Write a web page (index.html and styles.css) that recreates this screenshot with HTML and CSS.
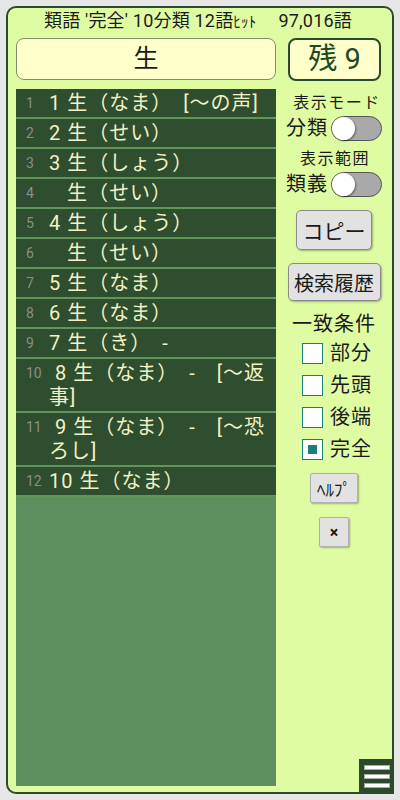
FILE: index.html
```html
<!DOCTYPE html>
<html lang="ja">
<head>
    <meta charset="UTF-8">
    <meta name="viewport" content="width=device-width, initial-scale=1.0">
    <title>類語検索</title>
    <link rel="stylesheet" href="styles.css">
</head>
<body>
    <div class="frame">
        <div class="status">
            <span>類語 '完全' 10分類 12語<span class="kana">ﾋｯﾄ</span></span>
            <span>97,016語</span>
        </div>

        <div class="top-row">
            <div class="search-box">生</div>
            <div class="remain-box">残 9</div>
        </div>

        <div class="main">
            <div class="result-list">
                <div class="row"><span class="num">1</span><span class="word">1 生（なま）　[～の声]</span></div>
                <div class="row"><span class="num">2</span><span class="word">2 生（せい）</span></div>
                <div class="row"><span class="num">3</span><span class="word">3 生（しょう）</span></div>
                <div class="row"><span class="num">4</span><span class="word">&nbsp;&nbsp; 生（せい）</span></div>
                <div class="row"><span class="num">5</span><span class="word">4 生（しょう）</span></div>
                <div class="row"><span class="num">6</span><span class="word">&nbsp;&nbsp; 生（せい）</span></div>
                <div class="row"><span class="num">7</span><span class="word">5 生（なま）</span></div>
                <div class="row"><span class="num">8</span><span class="word">6 生（なま）</span></div>
                <div class="row"><span class="num">9</span><span class="word">7 生（き）　-</span></div>
                <div class="row"><span class="num">10</span><span class="word">&nbsp;8 生（なま）　-　[～返事]</span></div>
                <div class="row"><span class="num">11</span><span class="word">&nbsp;9 生（なま）　-　[～恐ろし]</span></div>
                <div class="row"><span class="num">12</span><span class="word">10 生（なま）</span></div>
            </div>

            <div class="side">
                <div class="label">表示モード</div>
                <div class="switch-line">
                    <span>分類</span>
                    <span class="switch"><span class="knob"></span></span>
                </div>
                <div class="label label-second">表示範囲</div>
                <div class="switch-line">
                    <span>類義</span>
                    <span class="switch"><span class="knob"></span></span>
                </div>

                <button class="btn btn-copy">コピー</button>
                <button class="btn btn-history">検索履歴</button>

                <div class="match-title">一致条件</div>
                <div class="checks">
                    <div class="check-item"><span class="box"></span>部分</div>
                    <div class="check-item"><span class="box"></span>先頭</div>
                    <div class="check-item"><span class="box"></span>後端</div>
                    <div class="check-item"><span class="box checked"></span>完全</div>
                </div>

                <button class="btn btn-small btn-help">ﾍﾙﾌﾟ</button>
                <button class="btn btn-small btn-close">×</button>
            </div>
        </div>

        <div class="menu-button">
            <span></span><span></span><span></span>
        </div>
    </div>
</body>
</html>
```

FILE: styles.css
```css
:root {
    --frame-green: #2b4a2b;
    --panel-bg: #e0fca2;
    --row-bg: #2f4d2f;
    --row-line: #62955a;
    --list-bg: #5f8f5f;
    --row-text: #f2f2c4;
    --box-bg: #ffffcc;
    --teal: #17807f;
}

* {
    margin: 0;
    padding: 0;
    box-sizing: border-box;
}

body {
    width: 400px;
    height: 800px;
    background: #e6e6e6;
    font-family: Roboto, "Noto Sans CJK JP", sans-serif;
    color: #1a1a1a;
    padding: 6px;
}

.frame {
    position: relative;
    height: 788px;
    border: 2px solid var(--frame-green);
    border-radius: 10px;
    background: var(--panel-bg);
    display: flex;
    flex-direction: column;
    padding: 0 0 6px 8px;
}

.status {
    height: 28px;
    display: flex;
    justify-content: center;
    gap: 22px;
    font-size: 18px;
    line-height: 26px;
    letter-spacing: 0.2px;
    white-space: pre;
    padding-right: 12px;
}

.kana {
    font-size: 15px;
}

.top-row {
    display: flex;
    align-items: flex-start;
    gap: 12px;
    margin-top: 2px;
}

.search-box {
    width: 260px;
    height: 42px;
    background: var(--box-bg);
    border: 1px solid #7f8f68;
    border-radius: 8px;
    font-size: 25px;
    line-height: 40px;
    text-align: center;
}

.remain-box {
    width: 93px;
    height: 43px;
    background: var(--box-bg);
    border: 2px solid var(--frame-green);
    border-radius: 8px;
    font-size: 29px;
    line-height: 38px;
    text-align: center;
    color: #1f4a1f;
}

.main {
    flex: 1;
    display: flex;
    margin-top: 8px;
    min-height: 0;
}

.result-list {
    width: 260px;
    background: var(--list-bg);
    display: flex;
    flex-direction: column;
}

.row {
    display: flex;
    align-items: flex-start;
    background: var(--row-bg);
    border-bottom: 2px solid var(--row-line);
    padding: 2px 6px 2px 10px;
}

.num {
    width: 23px;
    flex: none;
    font-size: 14px;
    line-height: 24px;
    color: #8c8c8c;
}

.word {
    font-size: 20px;
    line-height: 24px;
    letter-spacing: 1px;
    color: var(--row-text);
}

.side {
    flex: 1;
    display: flex;
    flex-direction: column;
    align-items: center;
    padding-top: 4px;
}

.label {
    font-size: 16px;
    line-height: 20px;
    letter-spacing: 1.5px;
    margin-left: 6px;
}

.label-second {
    margin-top: 8px;
    margin-left: 2px;
}

.switch-line {
    display: flex;
    align-items: center;
    gap: 3px;
    font-size: 20px;
    line-height: 26px;
    letter-spacing: 1px;
    margin-top: 2px;
}

.switch {
    position: relative;
    width: 51px;
    height: 25px;
    border-radius: 13px;
    background: #a9a9a9;
    border: 1px solid #555;
}

.knob {
    position: absolute;
    left: 0;
    top: 0;
    width: 23px;
    height: 23px;
    border-radius: 50%;
    background: #fff;
    box-shadow: 1px 1px 2px rgba(0, 0, 0, 0.4);
}

.btn {
    font-family: inherit;
    background: #e2e2e2;
    border: 1px solid #8a8a8a;
    border-radius: 5px;
    box-shadow: 1px 1px 2px rgba(0, 0, 0, 0.3);
    color: #1a1a1a;
}

.btn-copy {
    width: 76px;
    height: 40px;
    font-size: 21px;
    margin-top: 13px;
}

.btn-history {
    width: 93px;
    height: 38px;
    font-size: 20px;
    margin-top: 13px;
}

.match-title {
    font-size: 20px;
    line-height: 24px;
    letter-spacing: 1px;
    margin-top: 11px;
}

.checks {
    display: flex;
    flex-direction: column;
    gap: 10px;
    margin-top: 6px;
    margin-left: 6px;
}

.check-item {
    display: flex;
    align-items: center;
    gap: 7px;
    font-size: 20px;
    line-height: 22px;
    letter-spacing: 1px;
}

.box {
    width: 21px;
    height: 21px;
    background: #fff;
    border: 1px solid var(--teal);
    display: flex;
    align-items: center;
    justify-content: center;
}

.box.checked::after {
    content: '';
    width: 9px;
    height: 9px;
    background: var(--teal);
}

.btn-small {
    border-radius: 2px;
    border-color: #b0b0b0;
    height: 30px;
}

.btn-help {
    width: 48px;
    font-size: 17px;
    margin-top: 13px;
}

.btn-close {
    width: 30px;
    margin-top: 14px;
    font-weight: bold;
    font-size: 16px;
}

.menu-button {
    position: absolute;
    right: -2px;
    bottom: -2px;
    width: 35px;
    height: 35px;
    background: var(--frame-green);
    display: flex;
    flex-direction: column;
    justify-content: center;
    align-items: center;
    gap: 4px;
}

.menu-button span {
    width: 26px;
    height: 5px;
    background: #fff;
    border: 1px solid #aaa;
}
```
